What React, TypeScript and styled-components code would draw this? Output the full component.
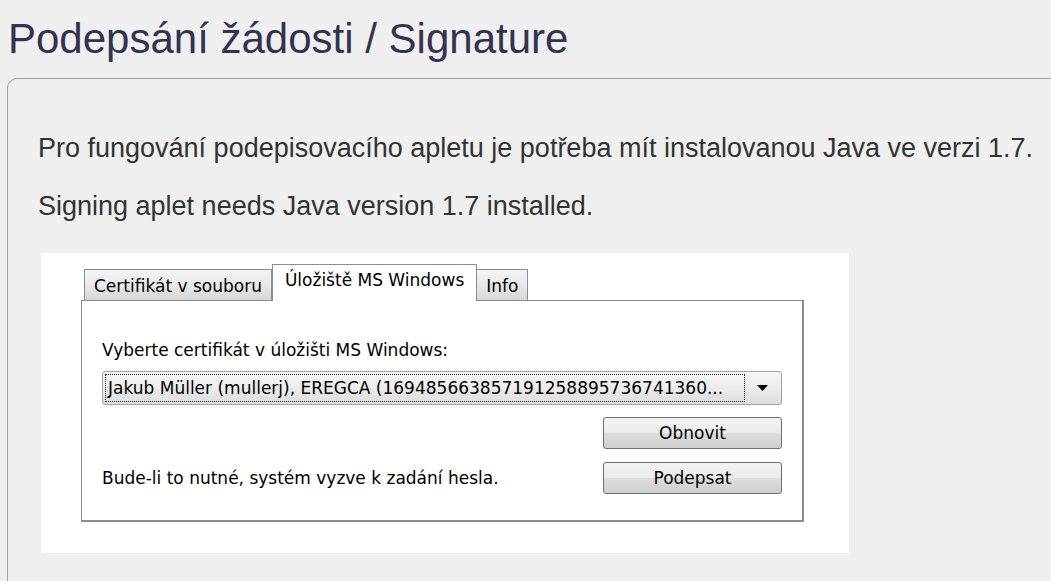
import React from 'react';
import styled, { createGlobalStyle } from 'styled-components';

const GlobalStyle = createGlobalStyle`
  html, body {
    margin: 0;
    padding: 0;
    background: #efefef;
    overflow: hidden;
  }
`;

const Page = styled.div`
  font-family: 'Liberation Sans', Arial, sans-serif;
  width: 1051px;
  height: 581px;
  overflow: hidden;
`;

const Title = styled.h1`
  margin: 15px 0 15px 8px;
  font-size: 42px;
  line-height: 48px;
  font-weight: normal;
  color: #33334f;
`;

const Fieldset = styled.div`
  margin-left: 7px;
  width: 1080px;
  min-height: 560px;
  border: 1px solid #a6a29b;
  border-radius: 10px;
  padding: 54px 0 0 30px;
  box-sizing: border-box;
`;

const Note = styled.p`
  margin: 0 0 27px;
  font-size: 27px;
  line-height: 31px;
  color: #333;
`;

const Applet = styled.div`
  margin: 31px 0 0 3px;
  width: 808px;
  height: 300px;
  background: #fff;
  padding: 11px 0 0 40px;
  box-sizing: border-box;
  font-family: 'DejaVu Sans', sans-serif;
  font-size: 17px;
  color: #000;
`;

const TabStrip = styled.div`
  display: flex;
  align-items: flex-end;
  height: 37px;
  padding-left: 3px;
  position: relative;
  z-index: 1;
  margin-bottom: -1px;
`;

const Tab = styled.div<{ $active?: boolean }>`
  height: ${(p) => (p.$active ? 37 : 32)}px;
  box-sizing: border-box;
  padding: 0 ${(p) => (p.$active ? 12 : 9)}px;
  border: 1px solid #898c95;
  border-bottom: ${(p) => (p.$active ? 'none' : '1px solid #898c95')};
  margin-left: ${(p) => (p.$active ? 0 : -1)}px;
  background: ${(p) =>
    p.$active ? '#fff' : 'linear-gradient(#f3f3f3, #e9e9e9 50%, #d6d6d6)'};
  display: flex;
  align-items: ${(p) => (p.$active ? 'flex-start' : 'center')};
  padding-top: ${(p) => (p.$active ? 5 : 2)}px;
  white-space: nowrap;
  &:first-child {
    margin-left: 0;
  }
`;

const TabBody = styled.div`
  width: 723px;
  height: 222px;
  box-sizing: border-box;
  border: 1px solid #898c95;
  border-right-width: 2px;
  border-bottom-width: 2px;
  padding: 39px 20px 0 20px;
`;

const Label = styled.div`
  line-height: 20px;
  height: 20px;
  margin-bottom: 11px;
`;

const Combo = styled.div`
  width: 680px;
  height: 34px;
  box-sizing: border-box;
  border: 1px solid #a3a3a3;
  border-radius: 3px;
  background: linear-gradient(#f6f6f6, #ececec 50%, #dcdcdc);
  display: flex;
  align-items: center;
  padding: 2px;
`;

const ComboText = styled.div`
  flex: 1;
  height: 100%;
  box-sizing: border-box;
  border: 1px dotted #222;
  display: flex;
  align-items: center;
  padding-left: 2px;
  white-space: nowrap;
  overflow: hidden;
`;

const Arrow = styled.div`
  width: 34px;
  display: flex;
  justify-content: center;
  align-items: center;
`;

const Actions = styled.div`
  display: flex;
  justify-content: space-between;
  align-items: flex-end;
  width: 680px;
  margin-top: 12px;
`;

const Hint = styled.div`
  padding-bottom: 6px;
`;

const Buttons = styled.div`
  display: flex;
  flex-direction: column;
  gap: 13px;
`;

const Button = styled.div`
  width: 179px;
  height: 32px;
  box-sizing: border-box;
  border: 1px solid #707070;
  border-radius: 3px;
  background: linear-gradient(#f2f2f2, #ebebeb 50%, #dddddd 51%, #cfcfcf);
  display: flex;
  justify-content: center;
  align-items: center;
`;

export default function App() {
  return (
    <Page>
      <GlobalStyle />
      <Title>Podepsání žádosti / Signature</Title>
      <Fieldset>
        <Note>Pro fungování podepisovacího apletu je potřeba mít instalovanou Java ve verzi 1.7.</Note>
        <Note>Signing aplet needs Java version 1.7 installed.</Note>
        <Applet>
          <TabStrip>
            <Tab>Certifikát v souboru</Tab>
            <Tab $active>Úložiště MS Windows</Tab>
            <Tab>Info</Tab>
          </TabStrip>
          <TabBody>
            <Label>Vyberte certifikát v úložišti MS Windows:</Label>
            <Combo>
              <ComboText>Jakub Müller (mullerj), EREGCA (169485663857191258895736741360...</ComboText>
              <Arrow>
                <svg width="11" height="6" viewBox="0 0 11 6">
                  <path d="M0 0 H11 L5.5 6 Z" fill="#000" />
                </svg>
              </Arrow>
            </Combo>
            <Actions>
              <Hint>Bude-li to nutné, systém vyzve k zadání hesla.</Hint>
              <Buttons>
                <Button>Obnovit</Button>
                <Button>Podepsat</Button>
              </Buttons>
            </Actions>
          </TabBody>
        </Applet>
      </Fieldset>
    </Page>
  );
}
